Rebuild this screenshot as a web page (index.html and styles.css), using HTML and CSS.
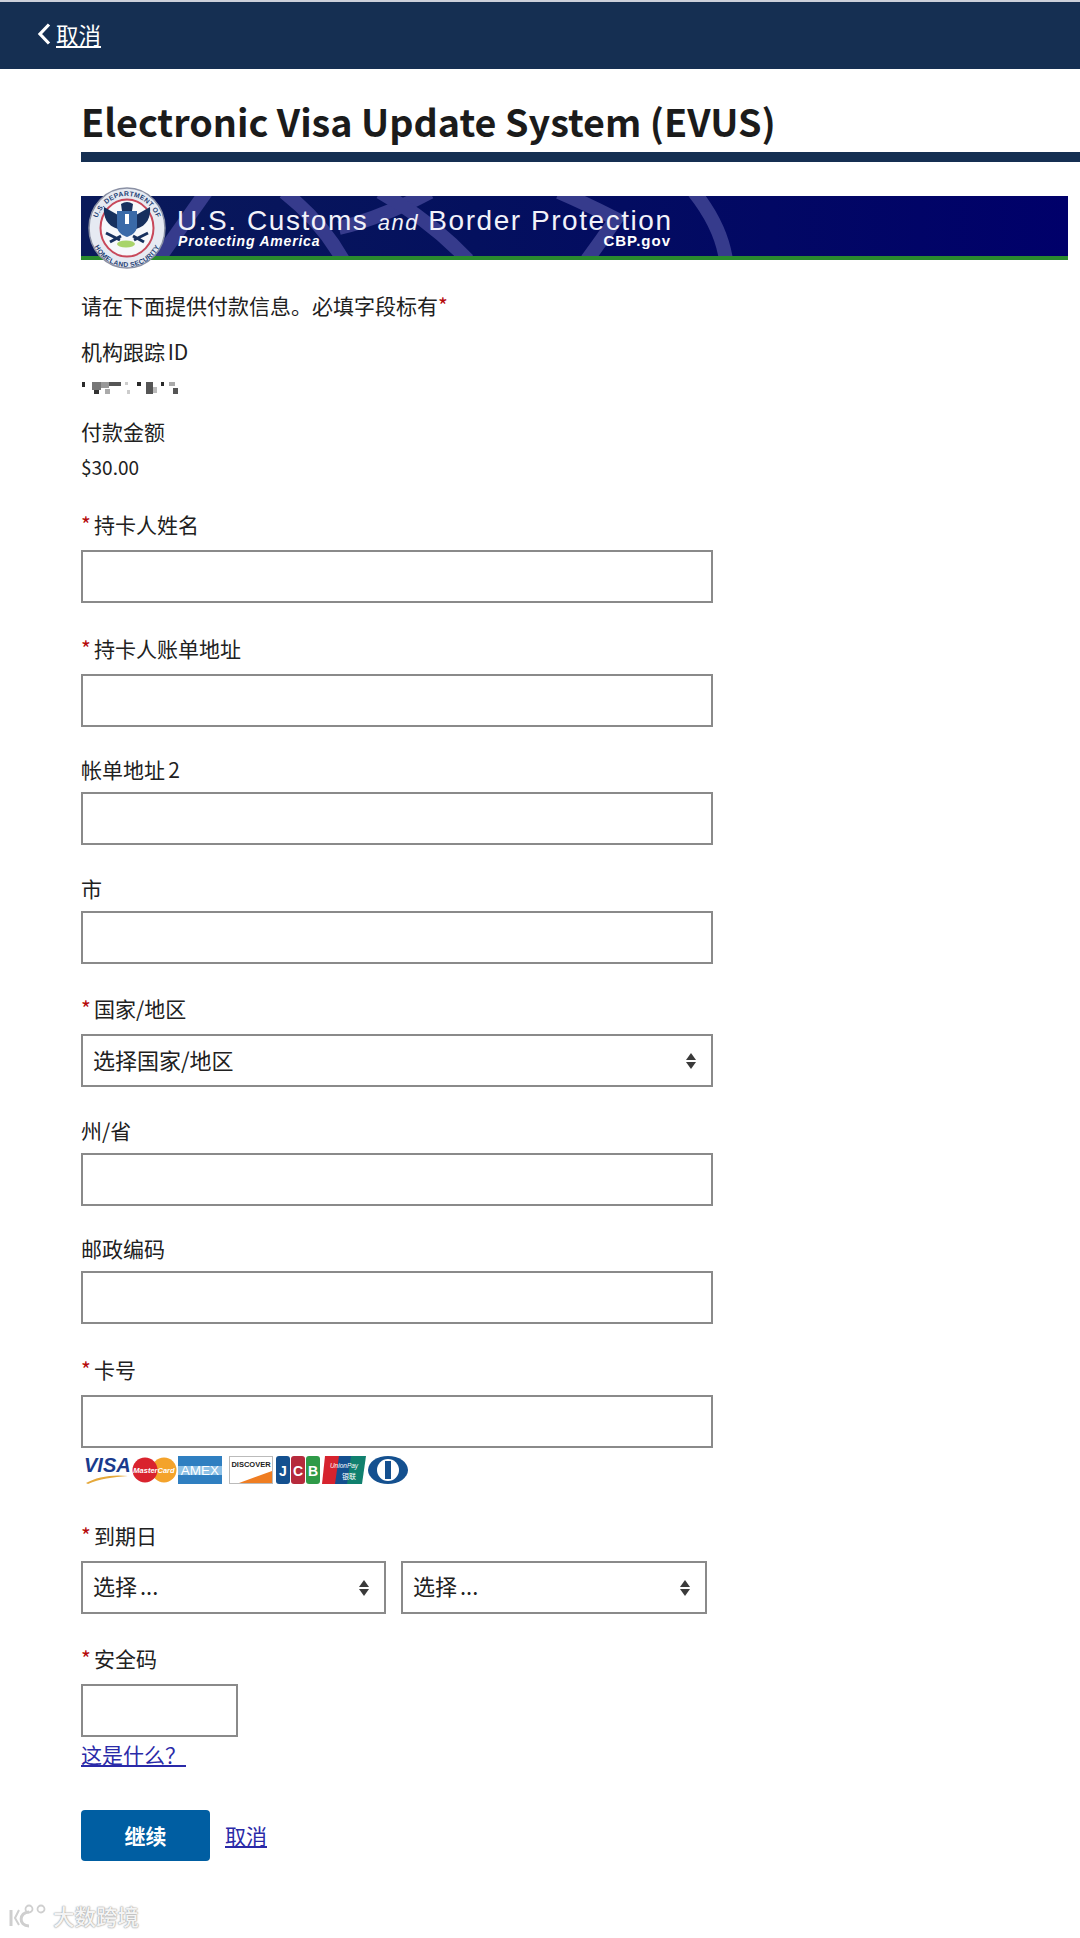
FILE: index.html
```html
<!DOCTYPE html>
<html lang="zh-CN">
<head>
<meta charset="utf-8">
<title>EVUS</title>
<link rel="stylesheet" href="styles.css">
</head>
<body>
<header class="topbar">
  <a class="back" href="#">
    <svg class="chev" width="14" height="24" viewBox="0 0 14 24"><path d="M12 2.500 L3 12 L12 21.500" fill="none" stroke="#fff" stroke-width="3.200"/></svg>
    <span class="back-text">取消</span>
  </a>
</header>
<main class="main">
  <h1 class="title">Electronic Visa Update System (EVUS)</h1>
  <div class="rule"></div>
  <div class="banner">
    <svg class="arcs" width="987" height="60" viewBox="0 0 987 60">
      <g fill="none" stroke="#363b8c" stroke-width="14">
        <path d="M77 64 L125 -4"/>
        <path d="M203 -4 Q240 25 262 64"/>
        <path d="M258 32 Q300 22 349 -4"/>
        <path d="M299 -4 Q350 25 387 64"/>
        <path d="M478 -4 Q510 10 535 23 Q520 45 506 64"/>
        <path d="M613 -4 Q640 30 645 64"/>
      </g>
    </svg>
    <svg class="seal" width="78" height="82" viewBox="0 0 78 82">
      <defs>
        <path id="sealtop" d="M7 44 A32 35 0 0 1 71 44"/>
        <path id="sealbot" d="M3 44 A36 36 0 0 0 75 44"/>
      </defs>
      <ellipse cx="39" cy="41" rx="38" ry="40" fill="#e6eaf2" stroke="#8a90a4" stroke-width="1.500"/>
      <ellipse cx="39" cy="41" rx="26.500" ry="28.500" fill="#f6f8fb" stroke="#c8485a" stroke-width="2"/>
      <text class="seal-text"><textPath href="#sealtop" startOffset="50%" text-anchor="middle">U.S. DEPARTMENT OF</textPath></text>
      <text class="seal-text"><textPath href="#sealbot" startOffset="50%" text-anchor="middle">HOMELAND SECURITY</textPath></text>
      <path d="M30 28 L16 20 C15 30 19 39 30 42 Z" fill="#16305e"/>
      <path d="M48 28 L62 20 C63 30 59 39 48 42 Z" fill="#16305e"/>
      <path d="M33 17 Q39 13 45 17 L44 24 H34 Z" fill="#16305e"/>
      <path d="M29 24 H49 V39 C49 46 42 49 39 50 C36 49 29 46 29 39 Z" fill="#3a6aa8"/>
      <rect x="37" y="27" width="4" height="10" fill="#fff"/>
      <path d="M18 46 L32 53 M60 46 L46 53 M22 55 L33 49 M56 55 L45 49" stroke="#16305e" stroke-width="3"/>
      <ellipse cx="38" cy="57" rx="9" ry="3.500" fill="#a8d46a"/>
    </svg>
    <div class="banner-text">
      <div class="banner-name">U.S. Customs <em class="and">and</em> Border Protection</div>
      <div class="banner-sub"><em class="motto">Protecting America</em><span class="cbp">CBP.gov</span></div>
    </div>
  </div>

  <p class="intro">请在下面提供付款信息。必填字段标有<span class="star">*</span></p>
  <p class="meta">机构跟踪 ID</p>
  <svg class="blur-id" width="100" height="16" viewBox="0 0 100 16">
    <g fill="#2a2a2a">
      <rect x="1" y="3" width="3" height="5"/>
      <rect x="11" y="3" width="9" height="8" fill="#777"/><rect x="13" y="11" width="5" height="4" fill="#333"/>
      <rect x="20" y="3" width="8" height="6" fill="#999"/><rect x="24" y="10" width="5" height="5" fill="#aaa"/>
      <rect x="28" y="3" width="12" height="4" fill="#555"/>
      <rect x="44" y="3" width="3" height="3" fill="#ccc"/><rect x="46" y="11" width="3" height="4" fill="#ccc"/>
      <rect x="56" y="3" width="4" height="4"/>
      <rect x="65" y="3" width="7" height="12" fill="#555"/><rect x="72" y="8" width="4" height="6" fill="#bbb"/>
      <rect x="80" y="3" width="3" height="4"/>
      <rect x="88" y="3" width="6" height="4" fill="#aaa"/><rect x="92" y="9" width="5" height="6" fill="#555"/>
    </g>
  </svg>
  <p class="meta meta-amount">付款金额</p>
  <p class="amount">$30.00</p>

  <form class="form">
    <div class="field field-req"><label class="label"><span class="star">*</span> 持卡人姓名</label><input class="input" type="text"></div>
    <div class="field field-req"><label class="label"><span class="star">*</span> 持卡人账单地址</label><input class="input" type="text"></div>
    <div class="field"><label class="label">帐单地址 2</label><input class="input" type="text"></div>
    <div class="field"><label class="label">市</label><input class="input" type="text"></div>
    <div class="field field-req"><label class="label"><span class="star">*</span> 国家/地区</label>
      <span class="select-wrap"><select class="select"><option>选择国家/地区</option></select></span></div>
    <div class="field"><label class="label">州/省</label><input class="input" type="text"></div>
    <div class="field"><label class="label">邮政编码</label><input class="input" type="text"></div>
    <div class="field field-req field-card"><label class="label"><span class="star">*</span> 卡号</label><input class="input" type="text">
      <svg class="cards" width="340" height="30" viewBox="0 0 340 30">
        <text x="3" y="17" class="c-visa">VISA</text>
        <path d="M5 28 C15 22 32 19 47 21 C32 22 18 24 7 29Z" fill="#e5a83a"/>
        <circle cx="83" cy="15" r="12.500" fill="#f4a32b"/><circle cx="64" cy="15" r="12.500" fill="#d9232e"/>
        <text x="73" y="18" class="c-mc" text-anchor="middle">MasterCard</text>
        <rect x="97" y="1" width="44" height="28" fill="#2f7fc1"/>
        <path d="M97 11 H141 V20 H97Z" fill="#8cc0e6"/>
        <text x="119" y="20" class="c-amex" text-anchor="middle">AMEX</text>
        <rect x="148.500" y="1.500" width="43" height="27" fill="#fff" stroke="#bbb"/>
        <text x="170" y="12" class="c-disc" text-anchor="middle">DISCOVER</text>
        <path d="M158 28 L191 16 V28Z" fill="#ef7d22"/>
        <rect x="195" y="1" width="14" height="28" rx="3" fill="#14508f"/>
        <rect x="210" y="1" width="14" height="28" rx="3" fill="#b62a3c"/>
        <rect x="225" y="1" width="14" height="28" rx="3" fill="#2f9a48"/>
        <text x="198 212 227" y="21" class="c-jcb">JCB</text>
        <path d="M244 1 H260 L256 29 H241Z" fill="#d6232e"/>
        <path d="M258 1 H272 L268 29 H254Z" fill="#14508f"/>
        <path d="M270 1 H285 L281 29 H266Z" fill="#10806e"/>
        <text x="263" y="13" class="c-up" text-anchor="middle">UnionPay</text>
        <text x="268" y="24" class="c-up2" text-anchor="middle">银联</text>
        <ellipse cx="307" cy="15" rx="20" ry="14" fill="#14508f"/>
        <circle cx="307" cy="15" r="11" fill="#fff"/>
        <rect x="304" y="6" width="6" height="18" fill="#14508f"/>
      </svg>
    </div>
    <div class="field field-req"><label class="label"><span class="star">*</span> 到期日</label>
      <div class="expiry">
        <span class="select-wrap"><select class="select"><option>选择 ...</option></select></span>
        <span class="select-wrap"><select class="select"><option>选择 ...</option></select></span>
      </div>
    </div>
    <div class="field field-req field-cvv"><label class="label"><span class="star">*</span> 安全码</label><input class="input input-cvv" type="text">
      <a class="link help" href="#">这是什么？</a></div>
    <div class="actions">
      <button class="btn" type="button">继续</button>
      <a class="link" href="#">取消</a>
    </div>
  </form>
</main>
<div class="watermark">
  <svg width="40" height="24" viewBox="0 0 40 24"><g fill="none" stroke="#cfcfcf"><path d="M2 6 V22" stroke-width="3"/><path d="M10 6 L6 14 L10 21" stroke-width="2"/><path d="M20 8 C10 8 9 22 20 22" stroke-width="3"/><circle cx="20" cy="5" r="3.500" stroke-width="1.800"/><circle cx="32" cy="5" r="3.500" stroke-width="1.800"/></g></svg>
  <span class="wm-text">大数跨境</span>
</div>
</body>
</html>
```
FILE: styles.css
```css
* { box-sizing: border-box; }
html, body { margin: 0; padding: 0; }
body {
  position: relative;
  width: 1080px;
  height: 1938px;
  overflow: hidden;
  background: #fff;
  color: #212121;
  font-family: "Noto Sans CJK SC", "Noto Sans", sans-serif;
  font-size: 21px;
  border-top: 2px solid #ccd0da;
}
.topbar {
  height: 67px;
  background: #152f52;
  display: flex;
  align-items: center;
  padding-left: 37px;
}
.back { display: flex; align-items: center; gap: 5px; color: #fff; text-decoration: none; margin-top: -3px; }
.back-text { font-size: 22.500px; text-decoration: underline; line-height: 30px; }
.main { padding-left: 81px; }
.title {
  margin: 30px 0 0;
  font-size: 37.700px;
  font-weight: 700;
  line-height: 44px;
  color: #1b1b1b;
}
.rule { height: 10px; margin-top: 9px; background: #152f52; }
.banner {
  position: relative;
  width: 987px;
  height: 64px;
  margin-top: 34px;
  background: linear-gradient(90deg, #0a1a5a 0%, #04105e 40%, #00006a 100%);
  border-bottom: 4px solid #2a8a2e;
  color: #fff;
  padding: 14px 0 0 96px;
}
.arcs { position: absolute; left: 0; top: 0; }
.seal { position: absolute; left: 7px; top: -9px; }
.seal-text { font: 700 6.800px "Liberation Sans", sans-serif; fill: #1f3f74; letter-spacing: .3px; }
.banner-text { position: relative; font-family: "Liberation Sans", sans-serif; width: 494px; }
.banner-name { font-size: 28px; letter-spacing: 1.550px; line-height: 22px; white-space: nowrap; color: #f2f2fa; }
.and { font-size: 22px; }
.banner-sub { display: flex; justify-content: space-between; align-items: center; font-weight: 700; line-height: 14px; }
.motto { font-size: 14px; letter-spacing: .8px; font-style: italic; padding-left: 1px; }
.cbp { font-size: 15px; letter-spacing: 1px; }
.intro { margin: 30px 0 0; line-height: 30px; }
.star { color: #b50909; }
.meta { margin: 16px 0 0; line-height: 30px; font-size: 21px; word-spacing: -2px; }
.blur-id { display: block; margin-top: 13px; }
.meta-amount { margin-top: 21px; }
.amount { margin: 6px 0 0; font-size: 19px; line-height: 30px; }
.form { display: flex; flex-direction: column; margin-top: 26px; }
.field { display: flex; flex-direction: column; align-items: flex-start; margin-bottom: 26.500px; }
.label { display: block; line-height: 30px; margin: 1px 0 8px; word-spacing: -1.500px; }
.field-req .label { margin-top: 3px; margin-bottom: 11px; }
.form > .field:first-child .label { margin-top: 1px; }
.input, .select {
  display: block;
  width: 632px;
  height: 53px;
  border: 2px solid #8a8a8a;
  background: #fff;
  border-radius: 0;
  font: inherit;
  color: #212121;
  padding: 0 10px;
  margin: 0;
  appearance: none;
  -webkit-appearance: none;
}
.select { font-size: 22px; padding-bottom: 4px; word-spacing: -2px; }
.select-wrap { position: relative; display: block; }
.select-wrap::before, .select-wrap::after {
  content: "";
  position: absolute;
  right: 17px;
  width: 0; height: 0;
  border-left: 5.500px solid transparent;
  border-right: 5.500px solid transparent;
  pointer-events: none;
}
.select-wrap::before { top: 19px; border-bottom: 7px solid #3a3a3a; }
.select-wrap::after { top: 28px; border-top: 7px solid #3a3a3a; }
.expiry { display: grid; grid-template-columns: 305px 306px; gap: 15px; }
.expiry .select { width: 100%; }
.input-cvv { width: 157px; }
.field-card { margin-bottom: 32px; }
.cards { display: block; margin-top: 7px; }
.c-visa { font: italic 700 20px "Liberation Sans", sans-serif; fill: #1a3a8c; }
.c-mc { font: italic 700 7.500px "Liberation Sans", sans-serif; fill: #fff; }
.c-amex { font: 400 13.500px "Liberation Sans", sans-serif; fill: #fff; }
.c-disc { font: 700 7.500px "Liberation Sans", sans-serif; fill: #222; }
.c-jcb { font: 700 14px "Liberation Sans", sans-serif; fill: #fff; }
.c-up { font: italic 6.500px "Liberation Sans", sans-serif; fill: #fff; }
.c-up2 { font: 7px "Noto Sans CJK SC", sans-serif; fill: #fff; }
.link { color: #2a2aa8; text-decoration: underline; font-size: 21px; line-height: 30px; }
.help { margin-top: 2px; }
.actions { display: flex; align-items: center; gap: 15px; margin-top: 14px; }
.btn {
  width: 129px;
  height: 51px;
  background: #005ea2;
  color: #fff;
  border: 0;
  border-radius: 4px;
  font: 700 21px "Noto Sans CJK SC", sans-serif;
  padding: 0;
}
.watermark {
  position: absolute;
  left: 9px;
  bottom: 8px;
  display: flex;
  align-items: center;
  gap: 4px;
}
.wm-text { font-size: 21.500px; font-weight: 500; line-height: 28px; color: #f4f4f4; text-shadow: 0 0 2px #9a9a9a, 0 0 1px #9a9a9a; }
```
